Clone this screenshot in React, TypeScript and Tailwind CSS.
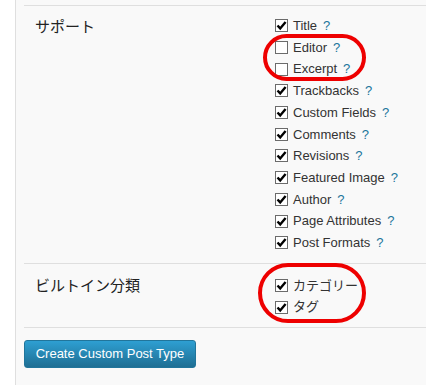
const supports: [string, boolean][] = [
  ['Title', true],
  ['Editor', false],
  ['Excerpt', false],
  ['Trackbacks', true],
  ['Custom Fields', true],
  ['Comments', true],
  ['Revisions', true],
  ['Featured Image', true],
  ['Author', true],
  ['Page Attributes', true],
  ['Post Formats', true],
]

const taxonomies: [string, boolean][] = [
  ['カテゴリー', true],
  ['タグ', true],
]

function Box({ checked }: { checked: boolean }) {
  return (
    <span className="w-[13px] h-[13px] border border-[#6b6b6b] bg-white flex items-center justify-center shrink-0">
      {checked && (
        <svg width="11" height="11" viewBox="0 0 11 11">
          <path d="M1.5 5.5 L4.2 8.4 L9.6 2" fill="none" stroke="#000" strokeWidth="2.4" />
        </svg>
      )}
    </span>
  )
}

function Option({ label, checked, help }: { label: string; checked: boolean; help: boolean }) {
  return (
    <div className="h-[21.7px] flex items-center gap-[5px] text-[13px] text-[#333]">
      <Box checked={checked} />
      <span>{label}</span>
      {help && <span className="text-[#21759b] ml-[1px]">?</span>}
    </div>
  )
}

export default function App() {
  return (
    <div
      className="w-[426px] h-[385px] bg-white flex overflow-hidden relative"
      style={{ fontFamily: '"Liberation Sans", Arial, "Noto Sans CJK JP", sans-serif' }}
    >
      <div className="w-[15px] shrink-0 bg-white" />
      <div className="flex-1 bg-[#f9f9f9] border-l border-[#dfdfdf] pl-[8px] pt-[5px]">
        <div className="border-t border-[#dfdfdf] flex pt-[9px] pb-[9px]">
          <div className="w-[251px] pl-[11px] pt-[1px] text-[15px] text-[#222] leading-[21px]">サポート</div>
          <div className="flex flex-col">
            {supports.map(([l, c]) => (
              <Option key={l} label={l} checked={c} help />
            ))}
          </div>
        </div>
        <div className="border-t border-[#dfdfdf] flex pt-[11px] pb-[9px]">
          <div className="w-[251px] pl-[11px] text-[15px] text-[#222] leading-[21px]">ビルトイン分類</div>
          <div className="flex flex-col">
            {taxonomies.map(([l, c]) => (
              <Option key={l} label={l} checked={c} help={false} />
            ))}
          </div>
        </div>
        <div className="border-t border-[#dfdfdf] pt-[12px]">
          <button className="h-[28px] w-[172px] rounded-[3px] border border-[#21759b] bg-gradient-to-b from-[#2e9fd2] to-[#1f6f94] text-white text-[13px] flex items-center justify-center">
            Create Custom Post Type
          </button>
        </div>
      </div>
      <div className="absolute left-[263px] top-[34px] w-[103px] h-[47px] rounded-full border-[4px] border-[#ee0000]" />
      <div className="absolute left-[258px] top-[263px] w-[108px] h-[60px] rounded-[30px] border-[4px] border-[#ee0000]" />
    </div>
  )
}
